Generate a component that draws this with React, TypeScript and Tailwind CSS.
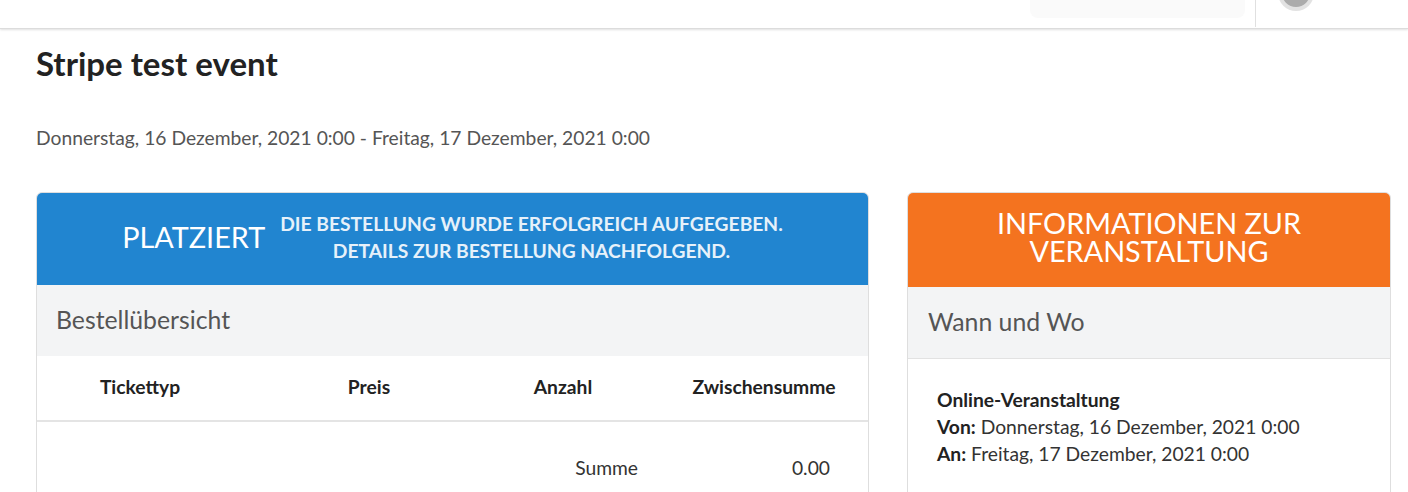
const App = () => {
  return (
    <div className="h-[492px] w-[1408px] overflow-hidden bg-white font-['Lato',sans-serif] text-[#222]">
      {/* Top bar, scrolled partly out of view */}
      <header className="flex h-[29px] items-end overflow-hidden border-b border-[#dcdcdc] pb-px shadow-[0_1px_2px_rgba(0,0,0,0.12)]">
        <div className="mb-[9px] ml-[1030px] h-[40px] w-[215px] shrink-0 rounded-lg bg-[#fafafa]"></div>
        <div className="ml-[10px] h-[40px] w-px shrink-0 bg-[#e0e0e0]"></div>
        <div className="mb-[16px] ml-[22px] flex h-[36px] w-[36px] shrink-0 items-center justify-center rounded-full bg-[#e2e2e2]">
          <div className="h-[28px] w-[28px] rounded-full bg-[#ababab]"></div>
        </div>
      </header>

      <main className="px-[36px]">
        <h1 className="mt-[14px] text-[33px] leading-[40px] font-bold text-[#222]">Stripe test event</h1>
        <p className="mt-[43px] text-[19.25px] leading-[24px] text-[#555]">
          Donnerstag, 16 Dezember, 2021 0:00 - Freitag, 17 Dezember, 2021 0:00
        </p>

        <div className="mt-[42px] flex items-start gap-[38px]">
          {/* Order */}
          <section className="h-[400px] w-[833px] shrink-0 rounded-t-md border border-[#dedede]">
            <div className="flex h-[92px] items-center justify-center rounded-t-[5px] bg-[#2185d0] pb-[5px] text-white">
              <span className="mr-[15px] text-[28.8px] leading-[34px]">PLATZIERT</span>
              <div className="text-center text-[19.25px] leading-[27px] font-bold text-[#e6f1fa]">
                DIE BESTELLUNG WURDE ERFOLGREICH AUFGEGEBEN.
                <br />
                DETAILS ZUR BESTELLUNG NACHFOLGEND.
              </div>
            </div>
            <div className="flex h-[71px] items-center bg-[#f3f4f5] px-[19px] pb-[2px] text-[24.8px] text-[#555]">
              Bestellübersicht
            </div>
            <div className="grid h-[66px] grid-cols-[206px_252px_165px_1fr] items-center border-b-2 border-[#e4e4e4] pb-[2px] text-center text-[19.25px] font-bold">
              <div>Tickettyp</div>
              <div>Preis</div>
              <div className="pr-[29px]">Anzahl</div>
              <div>Zwischensumme</div>
            </div>
            <div className="mt-[32px] flex justify-end pr-[38px] text-[19.25px] leading-[28px] text-[#333]">
              <span>Summe</span>
              <span className="w-[192px] text-right">0.00</span>
            </div>
          </section>

          {/* Event information */}
          <section className="h-[400px] w-[484px] shrink-0 rounded-t-md border border-[#dedede]">
            <div className="flex h-[94px] items-center justify-center rounded-t-[5px] bg-[#f4731f] pb-[6px] text-center text-[28.8px] leading-[28px] text-white">
              INFORMATIONEN ZUR
              <br />
              VERANSTALTUNG
            </div>
            <div className="flex h-[72px] items-center border-b border-[#e2e2e2] bg-[#f3f4f5] px-[20px] pb-[2px] text-[24.8px] text-[#555]">
              Wann und Wo
            </div>
            <div className="px-[29px] pt-[27px] text-[19.25px] leading-[27px] text-[#333]">
              <div className="font-bold text-[#222]">Online-Veranstaltung</div>
              <div>
                <b className="text-[#222]">Von:</b> Donnerstag, 16 Dezember, 2021 0:00
              </div>
              <div>
                <b className="text-[#222]">An:</b> Freitag, 17 Dezember, 2021 0:00
              </div>
            </div>
          </section>
        </div>
      </main>
    </div>
  );
};

export default App;
